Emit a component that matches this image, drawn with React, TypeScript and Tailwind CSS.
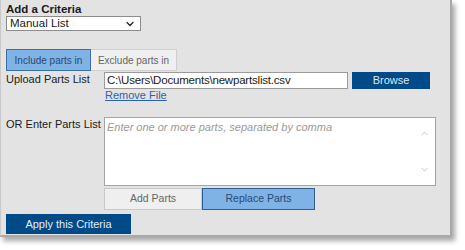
import { ChevronDown, ChevronUp } from "lucide-react";

const CriteriaPanel = () => {
  return (
    <div className="w-[452px] h-[237px] bg-[#e3e3e3] border-l border-[#c8c8c8] border-r-2 border-b-2 border-r-[#a9a9a9] border-b-[#a9a9a9] shadow-[3px_4px_5px_rgba(0,0,0,0.35)] px-[5px] pt-[3px] font-['Liberation_Sans',Arial,sans-serif] text-[11px] text-[#1a1a1a] flex flex-col">
      <div className="font-bold text-[11.5px] leading-[12px]">Add a Criteria</div>
      <div className="mt-px w-[135px] h-[15px] bg-white border border-[#8c8c8c] flex items-center justify-between pl-[3px] pr-[4px] text-[11.5px] leading-none">
        <span>Manual List</span>
        <ChevronDown size={12} strokeWidth={2.5} className="text-[#222]" />
      </div>

      <div className="mt-[18px] flex text-[10px]">
        <div className="w-[85px] h-[22px] bg-[#7fb3e5] border border-[#3c6fa5] text-[#294a72] flex items-center justify-center">
          Include parts in
        </div>
        <div className="w-[86px] h-[22px] bg-[#efefef] border border-[#cfcfcf] border-l-0 text-[#666] flex items-center justify-center">
          Exclude parts in
        </div>
      </div>

      <div className="flex">
        <div className="w-[98px] pt-[2px] leading-[12px]">Upload Parts List</div>
        <div className="flex flex-col pt-px">
          <div className="flex items-start gap-[4px]">
            <div className="w-[244px] h-[17px] bg-white border border-[#9a9a9a] pl-[2px] flex items-center text-[11.5px] tracking-[-0.2px]">
              C:\Users\Documents\newpartslist.csv
            </div>
            <div className="w-[78px] h-[17px] bg-[#004b87] text-[#dfe8f3] text-[11px] flex items-center justify-center">
              Browse
            </div>
          </div>
          <a className="ml-px text-[#2f62ad] underline leading-[12px] w-fit">Remove File</a>
        </div>
      </div>

      <div className="mt-[16px] flex">
        <div className="w-[98px] pt-px leading-[12px]">OR Enter Parts List</div>
        <div className="flex flex-col">
          <div className="relative w-[332px] h-[69px] bg-white border border-[#a5a5a5] px-[2px] pt-[1px] italic text-[#9a9a9a] text-[11px]">
            Enter one or more parts, separated by comma
            <ChevronUp size={11} strokeWidth={1.5} className="absolute right-[5px] top-[10px] text-[#aaa]" />
            <ChevronDown size={11} strokeWidth={1.5} className="absolute right-[5px] bottom-[10px] text-[#aaa]" />
          </div>
          <div className="mt-[2px] flex text-[10.5px]">
            <div className="w-[98px] h-[22px] bg-[#efefef] border border-[#c9c9c9] text-[#666] flex items-center justify-center">
              Add Parts
            </div>
            <div className="w-[113px] h-[22px] bg-[#7fb3e5] border border-[#2e5f92] text-[#294a72] flex items-center justify-center">
              Replace Parts
            </div>
          </div>
        </div>
      </div>

      <div className="mt-[4px] w-[125px] h-[20px] bg-[#004b87] text-[#e4ecf5] text-[11px] flex items-center justify-center">
        Apply this Criteria
      </div>
    </div>
  );
};

const App = () => {
  return (
    <div className="w-[465px] h-[250px] bg-white overflow-hidden">
      <CriteriaPanel />
    </div>
  );
};

export default App;
